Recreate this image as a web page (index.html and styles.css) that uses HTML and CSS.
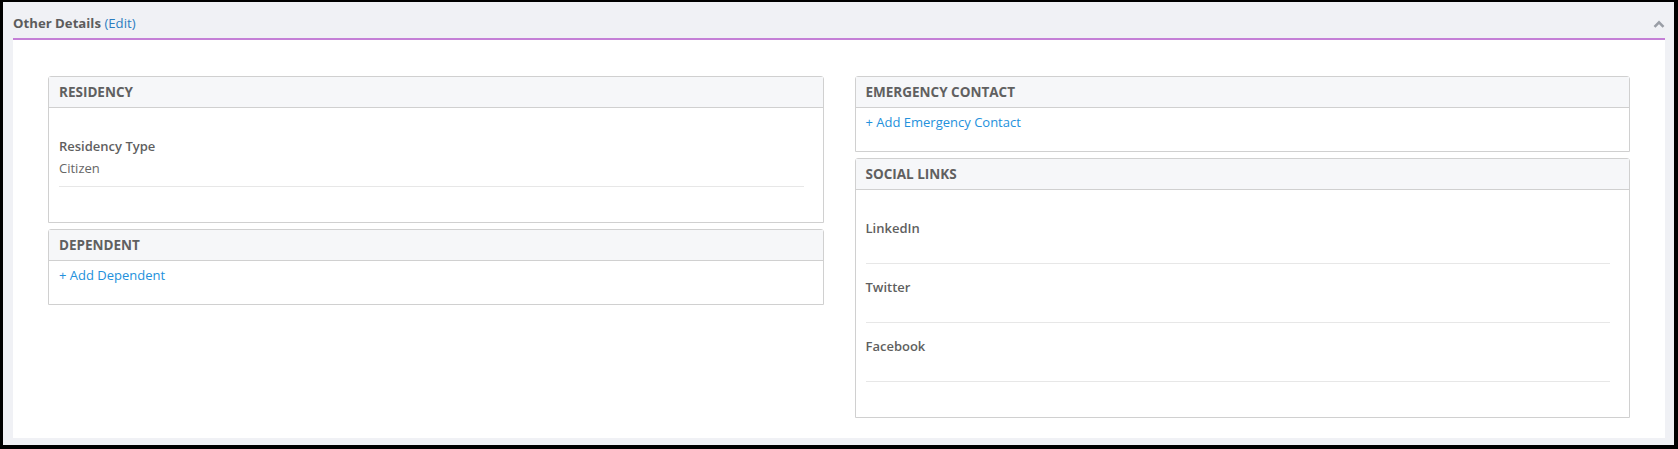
FILE: index.html
```html
<!DOCTYPE html>
<html>
	<head>
		<link rel="stylesheet" href="styles.css">
	</head>
	<body>
		<div class="panel">
			<div class="panel-heading">
				<div class="panel-title">Other Details <a class="edit-link" href="#">(Edit)</a></div>
				<svg class="collapse-icon" width="12" height="8" viewBox="0 0 12 8">
					<path d="M1.5 6.8 L6 2.3 L10.5 6.8" fill="none" stroke="#9a9ea6" stroke-width="2.6"/>
				</svg>
			</div>
			<div class="panel-body">
				<div class="column">
					<div class="box">
						<div class="box-header">RESIDENCY</div>
						<div class="box-body">
							<div class="field">
								<div class="field-label">Residency Type</div>
								<div class="field-value">Citizen</div>
							</div>
						</div>
					</div>
					<div class="box">
						<div class="box-header">DEPENDENT</div>
						<div class="box-link-body">
							<a class="add-link" href="#">+ Add Dependent</a>
						</div>
					</div>
				</div>
				<div class="column">
					<div class="box">
						<div class="box-header">EMERGENCY CONTACT</div>
						<div class="box-link-body">
							<a class="add-link" href="#">+ Add Emergency Contact</a>
						</div>
					</div>
					<div class="box">
						<div class="box-header">SOCIAL LINKS</div>
						<div class="box-body">
							<div class="field">
								<div class="field-label">LinkedIn</div>
								<div class="field-value"></div>
							</div>
							<div class="field">
								<div class="field-label">Twitter</div>
								<div class="field-value"></div>
							</div>
							<div class="field">
								<div class="field-label">Facebook</div>
								<div class="field-value"></div>
							</div>
						</div>
					</div>
				</div>
			</div>
		</div>
	</body>
</html>
```

FILE: styles.css
```css
html, body
{
	height: 100%;
}
body
{
	margin: 0;
	padding: 2px 4px 4px 3px;
	box-sizing: border-box;
	background-color: #000;
	font-family: "Open Sans", "Liberation Sans", sans-serif;
	font-size: 13px;
	color: #666;
}
.panel
{
	height: 100%;
	box-sizing: border-box;
	padding: 0 9px 8px 10px;
	background-color: #f0f1f5;
	display: flex;
	flex-direction: column;
}
.panel-heading
{
	display: flex;
	align-items: center;
	justify-content: space-between;
	padding: 12px 0 5px;
	border-bottom: 2px solid #c47fd6;
}
.panel-title
{
	font-size: 13.2px;
	line-height: 19px;
	font-weight: bold;
	color: #5c5c5c;
}
.edit-link
{
	font-weight: normal;
	color: #2c7cc0;
	text-decoration: none;
}
.collapse-icon
{
	display: block;
}
.panel-body
{
	flex: 1;
	display: flex;
	gap: 31px;
	align-items: flex-start;
	padding: 36px 35px 20px;
	background-color: #fff;
}
.column
{
	flex: 1;
	display: flex;
	flex-direction: column;
	gap: 6px;
}
.box
{
	border: 1px solid #d0d0d0;
	border-radius: 3px 3px 0 0;
}
.box-header
{
	height: 30px;
	line-height: 30px;
	padding-left: 10px;
	background-color: #f6f7f9;
	border-bottom: 1px solid #d0d0d0;
	font-size: 13.5px;
	font-weight: bold;
	color: #606060;
}
.box-body
{
	padding: 15px 19px 35px 10px;
}
.box-link-body
{
	padding: 5px 10px 20px;
	line-height: 18px;
}
.add-link
{
	color: #2391dc;
	text-decoration: none;
}
.field
{
	padding: 14px 0 9px;
	border-bottom: 1px solid #e7e7e7;
}
.field-label
{
	line-height: 18px;
	font-weight: 600;
	color: #5f5f5f;
}
.field-value
{
	margin-top: 4px;
	min-height: 13px;
	line-height: 18px;
	color: #666;
}
```
